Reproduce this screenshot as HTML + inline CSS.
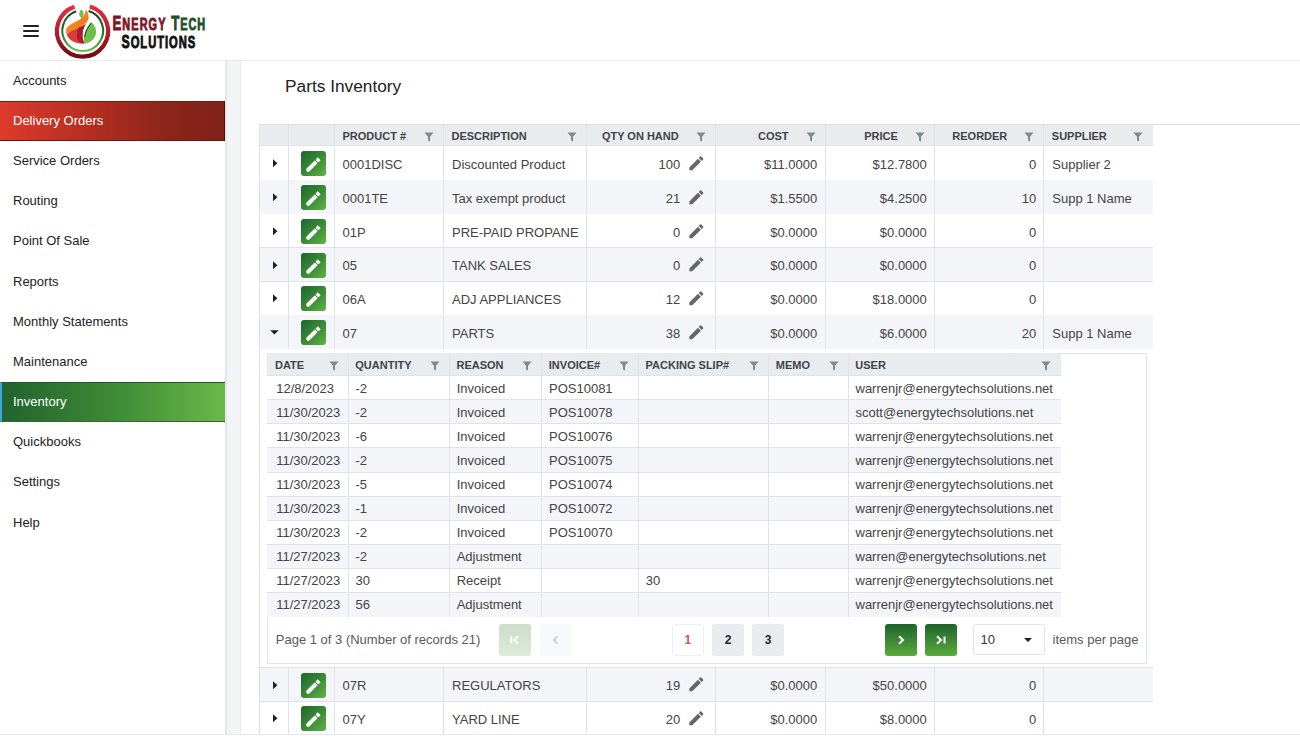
<!DOCTYPE html><html><head><meta charset="utf-8"><title>Parts Inventory</title><style>
*{box-sizing:border-box;margin:0;padding:0}
html,body{width:1300px;height:750px;overflow:hidden;background:#fff;font-family:"Liberation Sans", sans-serif;font-size:13px;color:#434343}
.a{position:absolute}
.t{position:absolute;white-space:nowrap}
.nav{position:absolute;left:0;width:225px;height:40.2px;color:#222;font-size:13px}
.nav span{position:absolute;left:13px;top:12px;line-height:15px}
.hd{position:absolute;background:#e9ecef;}
.ht{position:absolute;font-weight:bold;font-size:11px;color:#3e4348;line-height:13px;white-space:nowrap}
.fi{position:absolute;width:10px;height:10px}
.vl{position:absolute;width:1px;background:#dfe2e6}
.hl{position:absolute;height:1px;background:#dfe2e6}
.cell{position:absolute;white-space:nowrap;line-height:15px;color:#434343}
.eb{position:absolute;width:25px;height:25px;border-radius:3px;background:linear-gradient(135deg,#1d6530 0%,#3b8d35 55%,#62b446 100%)}
.pb{position:absolute;width:32px;height:32px;border-radius:3px}
</style></head><body>
<div class="a" style="left:0;top:60px;width:1300px;height:1px;background:#e8e9eb"></div>
<div class="a" style="left:23px;top:25.3px;width:16px;height:2px;background:#222;border-radius:1px"></div>
<div class="a" style="left:23px;top:30.3px;width:16px;height:2px;background:#222;border-radius:1px"></div>
<div class="a" style="left:23px;top:34.8px;width:16px;height:2px;background:#222;border-radius:1px"></div>
<svg class="a" style="left:50px;top:0" width="165" height="62" viewBox="0 0 165 62">
<defs>
<linearGradient id="rg" x1="0" y1="0" x2="0" y2="1"><stop offset="0" stop-color="#e2313f"/><stop offset="0.5" stop-color="#b81c2c"/><stop offset="1" stop-color="#720b17"/></linearGradient>
<linearGradient id="gg" x1="0" y1="0" x2="0" y2="1"><stop offset="0" stop-color="#17452a"/><stop offset="0.6" stop-color="#2f7a35"/><stop offset="1" stop-color="#6cc04a"/></linearGradient>
<linearGradient id="og" x1="0" y1="0" x2="1" y2="1"><stop offset="0" stop-color="#f7a21f"/><stop offset="1" stop-color="#ec6a1c"/></linearGradient>
</defs>
<path d="M 24.6 6.7 A 25.6 25.6 0 1 0 39.8 6.5" fill="none" stroke="url(#rg)" stroke-width="4.2"/>
<path d="M 26.2 11.3 A 20.4 20.4 0 1 0 38.6 11.1" fill="none" stroke="url(#gg)" stroke-width="2.1"/>
<path d="M 35.4 10.3 C 35.6 13.3 34.2 16 31 18.6 C 27 21.8 18.8 24.2 16.4 28.6 C 15.6 30.8 16 33 16.8 34.5 C 19 31.5 24 29.5 28 28 C 33 26 37.5 23 38.5 18.5 C 39 15.5 38 12.5 36.5 10.2 Z" fill="url(#og)"/>
<path d="M 16.8 34.5 C 19 31.5 24 29.5 28 28 C 31.5 26.8 34 25.5 36 24 C 33.5 27 32.5 31 32.5 36 C 32.5 39 33.5 41.5 34.5 43.5 C 26 44 18.5 40.5 16.8 34.5 Z" fill="#de3a3a"/>
<path d="M 28 28 C 31.5 26.8 34 25.5 36 24 C 33.5 27 32.5 31 32.5 36 C 32.5 39 33.5 41.5 34.5 43.5 C 31 43.5 28.5 42 27.5 39 C 26.5 35 27 31 28 28 Z" fill="#b01a2d"/>
<path d="M 41.5 22.5 C 45 25 46.5 29 46 33 C 45.5 38.5 40.5 43 34.5 43.5 C 33 39 34 33 36.5 29 C 38 26.5 40 24.5 41.5 22.5 Z" fill="#6fc04a"/>
<path d="M 41.5 22.8 C 38.5 26 35.5 31 34.8 37" fill="none" stroke="#1b5a2b" stroke-width="1.1"/>
<path d="M 31.2 9.6 C 34.2 11.5 34.5 15.8 31.8 18.4 C 28.6 16.6 28.4 12.3 31.2 9.6 Z" fill="#74bf4e"/>
</svg>
<svg class="a" style="left:108px;top:10px" width="105" height="42" viewBox="0 0 105 42">
<g transform="scale(0.68,1)">
<text x="6.47" y="19.6" font-family="Liberation Sans" font-weight="bold" fill="#7d1527" stroke="#7d1527" stroke-width="0.9" textLength="77.94" lengthAdjust="spacing"><tspan font-size="19.5">E</tspan><tspan font-size="16">NERGY</tspan></text>
<text x="92.94" y="19.6" font-family="Liberation Sans" font-weight="bold" fill="#1f4f2a" stroke="#1f4f2a" stroke-width="0.9" textLength="50.00" lengthAdjust="spacing"><tspan font-size="19.5">T</tspan><tspan font-size="16">ECH</tspan></text>
<text x="20.00" y="37.6" font-family="Liberation Sans" font-weight="bold" fill="#111" stroke="#111" stroke-width="0.9" textLength="108.24" lengthAdjust="spacing"><tspan font-size="18">S</tspan><tspan font-size="16.5">OLUTIONS</tspan></text>
</g>
</svg>
<div class="nav" style="top:60.60px;"><span style="">Accounts</span></div>
<div class="nav" style="top:100.78px;background:linear-gradient(90deg,#dd3b2c 0%,#b02c20 45%,#8a2519 75%,#80211a 100%);color:#fff;border-top:1px solid #7a1a12;border-bottom:1px solid #6a1410;border-right:1px solid #4a0c0a;"><span style="top:11px">Delivery Orders</span></div>
<div class="nav" style="top:140.96px;"><span style="">Service Orders</span></div>
<div class="nav" style="top:181.14px;"><span style="">Routing</span></div>
<div class="nav" style="top:221.32px;"><span style="">Point Of Sale</span></div>
<div class="nav" style="top:261.50px;"><span style="">Reports</span></div>
<div class="nav" style="top:301.68px;"><span style="">Monthly Statements</span></div>
<div class="nav" style="top:341.86px;"><span style="">Maintenance</span></div>
<div class="nav" style="top:382.04px;background:linear-gradient(90deg,#22622d 0%,#3f8a37 50%,#6ab947 100%);color:#fff;border-left:2px solid #3ea7dc;border-top:1px solid #1e5a28;border-bottom:1px solid #2c6e2e;"><span style="left:11px;top:11px">Inventory</span></div>
<div class="nav" style="top:422.22px;"><span style="">Quickbooks</span></div>
<div class="nav" style="top:462.40px;"><span style="">Settings</span></div>
<div class="nav" style="top:502.58px;"><span style="">Help</span></div>
<div class="a" style="left:225px;top:61px;width:2px;height:673px;background:#e4e6e9"></div>
<div class="a" style="left:227px;top:61px;width:12.5px;height:673px;background:#f3f4f6"></div>
<div class="a" style="left:239.5px;top:61px;width:1.5px;height:673px;background:#e8e9ec"></div>
<div class="a" style="left:0;top:734px;width:1300px;height:1px;background:#e6e8eb"></div>
<div class="t" style="left:285px;top:75.8px;font-size:17.3px;line-height:20px;color:#222">Parts Inventory</div>
<div class="hd" style="left:259.0px;top:124.50px;width:893.70px;height:21.90px"></div>
<div class="hl" style="left:259.0px;top:124px;width:1041.0px;background:#dcdfe3"></div>
<div class="hl" style="left:259.0px;top:145.40px;width:893.70px;background:#e2e5e9"></div>
<div class="ht" style="left:342.50px;top:130.00px">PRODUCT #</div>
<svg class="fi" style="left:424.00px;top:131.90px" width="10" height="10" viewBox="0 0 10 10"><path d="M0.5 0.5 H9.5 L6 4.8 V9.5 L4 8.5 V4.8 Z" fill="#7d8a8c"/></svg>
<div class="ht" style="left:451.50px;top:130.00px">DESCRIPTION</div>
<svg class="fi" style="left:567.00px;top:131.90px" width="10" height="10" viewBox="0 0 10 10"><path d="M0.5 0.5 H9.5 L6 4.8 V9.5 L4 8.5 V4.8 Z" fill="#7d8a8c"/></svg>
<div class="ht" style="right:621.30px;top:130.00px">QTY ON HAND</div>
<svg class="fi" style="left:695.70px;top:131.90px" width="10" height="10" viewBox="0 0 10 10"><path d="M0.5 0.5 H9.5 L6 4.8 V9.5 L4 8.5 V4.8 Z" fill="#7d8a8c"/></svg>
<div class="ht" style="right:511.50px;top:130.00px">COST</div>
<svg class="fi" style="left:805.50px;top:131.90px" width="10" height="10" viewBox="0 0 10 10"><path d="M0.5 0.5 H9.5 L6 4.8 V9.5 L4 8.5 V4.8 Z" fill="#7d8a8c"/></svg>
<div class="ht" style="right:402.20px;top:130.00px">PRICE</div>
<svg class="fi" style="left:914.80px;top:131.90px" width="10" height="10" viewBox="0 0 10 10"><path d="M0.5 0.5 H9.5 L6 4.8 V9.5 L4 8.5 V4.8 Z" fill="#7d8a8c"/></svg>
<div class="ht" style="right:292.70px;top:130.00px">REORDER</div>
<svg class="fi" style="left:1024.30px;top:131.90px" width="10" height="10" viewBox="0 0 10 10"><path d="M0.5 0.5 H9.5 L6 4.8 V9.5 L4 8.5 V4.8 Z" fill="#7d8a8c"/></svg>
<div class="ht" style="left:1051.80px;top:130.00px">SUPPLIER</div>
<svg class="fi" style="left:1133.20px;top:131.90px" width="10" height="10" viewBox="0 0 10 10"><path d="M0.5 0.5 H9.5 L6 4.8 V9.5 L4 8.5 V4.8 Z" fill="#7d8a8c"/></svg>
<div class="vl" style="left:258.50px;top:124.50px;height:21.90px"></div>
<div class="vl" style="left:287.80px;top:124.50px;height:21.90px"></div>
<div class="vl" style="left:334.00px;top:124.50px;height:21.90px"></div>
<div class="vl" style="left:443.00px;top:124.50px;height:21.90px"></div>
<div class="vl" style="left:586.00px;top:124.50px;height:21.90px"></div>
<div class="vl" style="left:714.70px;top:124.50px;height:21.90px"></div>
<div class="vl" style="left:824.50px;top:124.50px;height:21.90px"></div>
<div class="vl" style="left:933.80px;top:124.50px;height:21.90px"></div>
<div class="vl" style="left:1043.30px;top:124.50px;height:21.90px"></div>
<div class="a" style="left:259.0px;top:146.40px;width:893.70px;height:33.8px;background:#fff"></div>
<div class="hl" style="left:259.0px;top:179.70px;width:893.70px"></div>
<div class="vl" style="left:258.50px;top:146.40px;height:33.8px"></div>
<div class="vl" style="left:287.80px;top:146.40px;height:33.8px"></div>
<div class="vl" style="left:334.00px;top:146.40px;height:33.8px"></div>
<div class="vl" style="left:443.00px;top:146.40px;height:33.8px"></div>
<div class="vl" style="left:586.00px;top:146.40px;height:33.8px"></div>
<div class="vl" style="left:714.70px;top:146.40px;height:33.8px"></div>
<div class="vl" style="left:824.50px;top:146.40px;height:33.8px"></div>
<div class="vl" style="left:933.80px;top:146.40px;height:33.8px"></div>
<div class="vl" style="left:1043.30px;top:146.40px;height:33.8px"></div>
<svg class="a" style="left:271.60px;top:159.10px" width="7" height="9" viewBox="0 0 7 9"><path d="M1 0.3 V8.3 L5.4 4.3 Z" fill="#1e1e1e"/></svg>
<div class="eb" style="left:301.2px;top:151.10px"><svg class="a" style="left:0;top:0" width="25" height="25" viewBox="0 0 25 25"><path d="M7.2 18.8 L14.9 11.1" stroke="#fff" stroke-width="4.1" stroke-linecap="round"/><path d="M16.1 9.9 L18.2 7.8" stroke="#fff" stroke-width="4.1"/><path d="M14.1 9.1 L16.9 11.9" stroke="#2f7434" stroke-width="0.9"/></svg></div>
<div class="cell" style="left:342.50px;top:156.90px">0001DISC</div>
<div class="cell" style="left:452.00px;top:156.90px">Discounted Product</div>
<div class="cell" style="right:619.80px;top:156.90px">100</div>
<svg class="a" style="left:686.60px;top:154.00px" width="18.7" height="18.7" viewBox="0 0 24 24"><path d="M3 17.25V21h3.75L17.81 9.94l-3.75-3.75L3 17.25zM20.71 7.04c.39-.39.39-1.02 0-1.41l-2.34-2.34c-.39-.39-1.02-.39-1.41 0l-1.83 1.83 3.75 3.75 1.83-1.83z" fill="#666"/></svg>
<div class="cell" style="right:482.80px;top:156.90px">$11.0000</div>
<div class="cell" style="right:373.20px;top:156.90px">$12.7800</div>
<div class="cell" style="right:263.70px;top:156.90px">0</div>
<div class="cell" style="left:1052.30px;top:156.90px">Supplier 2</div>
<div class="a" style="left:259.0px;top:180.20px;width:893.70px;height:33.8px;background:#f4f5f8"></div>
<div class="hl" style="left:259.0px;top:213.50px;width:893.70px"></div>
<div class="vl" style="left:258.50px;top:180.20px;height:33.8px"></div>
<div class="vl" style="left:287.80px;top:180.20px;height:33.8px"></div>
<div class="vl" style="left:334.00px;top:180.20px;height:33.8px"></div>
<div class="vl" style="left:443.00px;top:180.20px;height:33.8px"></div>
<div class="vl" style="left:586.00px;top:180.20px;height:33.8px"></div>
<div class="vl" style="left:714.70px;top:180.20px;height:33.8px"></div>
<div class="vl" style="left:824.50px;top:180.20px;height:33.8px"></div>
<div class="vl" style="left:933.80px;top:180.20px;height:33.8px"></div>
<div class="vl" style="left:1043.30px;top:180.20px;height:33.8px"></div>
<svg class="a" style="left:271.60px;top:192.90px" width="7" height="9" viewBox="0 0 7 9"><path d="M1 0.3 V8.3 L5.4 4.3 Z" fill="#1e1e1e"/></svg>
<div class="eb" style="left:301.2px;top:184.90px"><svg class="a" style="left:0;top:0" width="25" height="25" viewBox="0 0 25 25"><path d="M7.2 18.8 L14.9 11.1" stroke="#fff" stroke-width="4.1" stroke-linecap="round"/><path d="M16.1 9.9 L18.2 7.8" stroke="#fff" stroke-width="4.1"/><path d="M14.1 9.1 L16.9 11.9" stroke="#2f7434" stroke-width="0.9"/></svg></div>
<div class="cell" style="left:342.50px;top:190.70px">0001TE</div>
<div class="cell" style="left:452.00px;top:190.70px">Tax exempt product</div>
<div class="cell" style="right:619.80px;top:190.70px">21</div>
<svg class="a" style="left:686.60px;top:187.80px" width="18.7" height="18.7" viewBox="0 0 24 24"><path d="M3 17.25V21h3.75L17.81 9.94l-3.75-3.75L3 17.25zM20.71 7.04c.39-.39.39-1.02 0-1.41l-2.34-2.34c-.39-.39-1.02-.39-1.41 0l-1.83 1.83 3.75 3.75 1.83-1.83z" fill="#666"/></svg>
<div class="cell" style="right:482.80px;top:190.70px">$1.5500</div>
<div class="cell" style="right:373.20px;top:190.70px">$4.2500</div>
<div class="cell" style="right:263.70px;top:190.70px">10</div>
<div class="cell" style="left:1052.30px;top:190.70px">Supp 1 Name</div>
<div class="a" style="left:259.0px;top:214.00px;width:893.70px;height:33.8px;background:#fff"></div>
<div class="hl" style="left:259.0px;top:247.30px;width:893.70px"></div>
<div class="vl" style="left:258.50px;top:214.00px;height:33.8px"></div>
<div class="vl" style="left:287.80px;top:214.00px;height:33.8px"></div>
<div class="vl" style="left:334.00px;top:214.00px;height:33.8px"></div>
<div class="vl" style="left:443.00px;top:214.00px;height:33.8px"></div>
<div class="vl" style="left:586.00px;top:214.00px;height:33.8px"></div>
<div class="vl" style="left:714.70px;top:214.00px;height:33.8px"></div>
<div class="vl" style="left:824.50px;top:214.00px;height:33.8px"></div>
<div class="vl" style="left:933.80px;top:214.00px;height:33.8px"></div>
<div class="vl" style="left:1043.30px;top:214.00px;height:33.8px"></div>
<svg class="a" style="left:271.60px;top:226.70px" width="7" height="9" viewBox="0 0 7 9"><path d="M1 0.3 V8.3 L5.4 4.3 Z" fill="#1e1e1e"/></svg>
<div class="eb" style="left:301.2px;top:218.70px"><svg class="a" style="left:0;top:0" width="25" height="25" viewBox="0 0 25 25"><path d="M7.2 18.8 L14.9 11.1" stroke="#fff" stroke-width="4.1" stroke-linecap="round"/><path d="M16.1 9.9 L18.2 7.8" stroke="#fff" stroke-width="4.1"/><path d="M14.1 9.1 L16.9 11.9" stroke="#2f7434" stroke-width="0.9"/></svg></div>
<div class="cell" style="left:342.50px;top:224.50px">01P</div>
<div class="cell" style="left:452.00px;top:224.50px">PRE-PAID PROPANE</div>
<div class="cell" style="right:619.80px;top:224.50px">0</div>
<svg class="a" style="left:686.60px;top:221.60px" width="18.7" height="18.7" viewBox="0 0 24 24"><path d="M3 17.25V21h3.75L17.81 9.94l-3.75-3.75L3 17.25zM20.71 7.04c.39-.39.39-1.02 0-1.41l-2.34-2.34c-.39-.39-1.02-.39-1.41 0l-1.83 1.83 3.75 3.75 1.83-1.83z" fill="#666"/></svg>
<div class="cell" style="right:482.80px;top:224.50px">$0.0000</div>
<div class="cell" style="right:373.20px;top:224.50px">$0.0000</div>
<div class="cell" style="right:263.70px;top:224.50px">0</div>
<div class="cell" style="left:1052.30px;top:224.50px"></div>
<div class="a" style="left:259.0px;top:247.80px;width:893.70px;height:33.8px;background:#f4f5f8"></div>
<div class="hl" style="left:259.0px;top:281.10px;width:893.70px"></div>
<div class="vl" style="left:258.50px;top:247.80px;height:33.8px"></div>
<div class="vl" style="left:287.80px;top:247.80px;height:33.8px"></div>
<div class="vl" style="left:334.00px;top:247.80px;height:33.8px"></div>
<div class="vl" style="left:443.00px;top:247.80px;height:33.8px"></div>
<div class="vl" style="left:586.00px;top:247.80px;height:33.8px"></div>
<div class="vl" style="left:714.70px;top:247.80px;height:33.8px"></div>
<div class="vl" style="left:824.50px;top:247.80px;height:33.8px"></div>
<div class="vl" style="left:933.80px;top:247.80px;height:33.8px"></div>
<div class="vl" style="left:1043.30px;top:247.80px;height:33.8px"></div>
<svg class="a" style="left:271.60px;top:260.50px" width="7" height="9" viewBox="0 0 7 9"><path d="M1 0.3 V8.3 L5.4 4.3 Z" fill="#1e1e1e"/></svg>
<div class="eb" style="left:301.2px;top:252.50px"><svg class="a" style="left:0;top:0" width="25" height="25" viewBox="0 0 25 25"><path d="M7.2 18.8 L14.9 11.1" stroke="#fff" stroke-width="4.1" stroke-linecap="round"/><path d="M16.1 9.9 L18.2 7.8" stroke="#fff" stroke-width="4.1"/><path d="M14.1 9.1 L16.9 11.9" stroke="#2f7434" stroke-width="0.9"/></svg></div>
<div class="cell" style="left:342.50px;top:258.30px">05</div>
<div class="cell" style="left:452.00px;top:258.30px">TANK SALES</div>
<div class="cell" style="right:619.80px;top:258.30px">0</div>
<svg class="a" style="left:686.60px;top:255.40px" width="18.7" height="18.7" viewBox="0 0 24 24"><path d="M3 17.25V21h3.75L17.81 9.94l-3.75-3.75L3 17.25zM20.71 7.04c.39-.39.39-1.02 0-1.41l-2.34-2.34c-.39-.39-1.02-.39-1.41 0l-1.83 1.83 3.75 3.75 1.83-1.83z" fill="#666"/></svg>
<div class="cell" style="right:482.80px;top:258.30px">$0.0000</div>
<div class="cell" style="right:373.20px;top:258.30px">$0.0000</div>
<div class="cell" style="right:263.70px;top:258.30px">0</div>
<div class="cell" style="left:1052.30px;top:258.30px"></div>
<div class="a" style="left:259.0px;top:281.60px;width:893.70px;height:33.8px;background:#fff"></div>
<div class="hl" style="left:259.0px;top:314.90px;width:893.70px"></div>
<div class="vl" style="left:258.50px;top:281.60px;height:33.8px"></div>
<div class="vl" style="left:287.80px;top:281.60px;height:33.8px"></div>
<div class="vl" style="left:334.00px;top:281.60px;height:33.8px"></div>
<div class="vl" style="left:443.00px;top:281.60px;height:33.8px"></div>
<div class="vl" style="left:586.00px;top:281.60px;height:33.8px"></div>
<div class="vl" style="left:714.70px;top:281.60px;height:33.8px"></div>
<div class="vl" style="left:824.50px;top:281.60px;height:33.8px"></div>
<div class="vl" style="left:933.80px;top:281.60px;height:33.8px"></div>
<div class="vl" style="left:1043.30px;top:281.60px;height:33.8px"></div>
<svg class="a" style="left:271.60px;top:294.30px" width="7" height="9" viewBox="0 0 7 9"><path d="M1 0.3 V8.3 L5.4 4.3 Z" fill="#1e1e1e"/></svg>
<div class="eb" style="left:301.2px;top:286.30px"><svg class="a" style="left:0;top:0" width="25" height="25" viewBox="0 0 25 25"><path d="M7.2 18.8 L14.9 11.1" stroke="#fff" stroke-width="4.1" stroke-linecap="round"/><path d="M16.1 9.9 L18.2 7.8" stroke="#fff" stroke-width="4.1"/><path d="M14.1 9.1 L16.9 11.9" stroke="#2f7434" stroke-width="0.9"/></svg></div>
<div class="cell" style="left:342.50px;top:292.10px">06A</div>
<div class="cell" style="left:452.00px;top:292.10px">ADJ APPLIANCES</div>
<div class="cell" style="right:619.80px;top:292.10px">12</div>
<svg class="a" style="left:686.60px;top:289.20px" width="18.7" height="18.7" viewBox="0 0 24 24"><path d="M3 17.25V21h3.75L17.81 9.94l-3.75-3.75L3 17.25zM20.71 7.04c.39-.39.39-1.02 0-1.41l-2.34-2.34c-.39-.39-1.02-.39-1.41 0l-1.83 1.83 3.75 3.75 1.83-1.83z" fill="#666"/></svg>
<div class="cell" style="right:482.80px;top:292.10px">$0.0000</div>
<div class="cell" style="right:373.20px;top:292.10px">$18.0000</div>
<div class="cell" style="right:263.70px;top:292.10px">0</div>
<div class="cell" style="left:1052.30px;top:292.10px"></div>
<div class="a" style="left:259.0px;top:315.40px;width:893.70px;height:33.8px;background:#f4f5f8"></div>
<div class="hl" style="left:259.0px;top:348.70px;width:893.70px"></div>
<div class="vl" style="left:258.50px;top:315.40px;height:33.8px"></div>
<div class="vl" style="left:287.80px;top:315.40px;height:33.8px"></div>
<div class="vl" style="left:334.00px;top:315.40px;height:33.8px"></div>
<div class="vl" style="left:443.00px;top:315.40px;height:33.8px"></div>
<div class="vl" style="left:586.00px;top:315.40px;height:33.8px"></div>
<div class="vl" style="left:714.70px;top:315.40px;height:33.8px"></div>
<div class="vl" style="left:824.50px;top:315.40px;height:33.8px"></div>
<div class="vl" style="left:933.80px;top:315.40px;height:33.8px"></div>
<div class="vl" style="left:1043.30px;top:315.40px;height:33.8px"></div>
<svg class="a" style="left:270.00px;top:329.10px" width="9" height="7" viewBox="0 0 9 7"><path d="M0.2 1.2 H8.6 L4.4 5.6 Z" fill="#1e1e1e"/></svg>
<div class="eb" style="left:301.2px;top:320.10px"><svg class="a" style="left:0;top:0" width="25" height="25" viewBox="0 0 25 25"><path d="M7.2 18.8 L14.9 11.1" stroke="#fff" stroke-width="4.1" stroke-linecap="round"/><path d="M16.1 9.9 L18.2 7.8" stroke="#fff" stroke-width="4.1"/><path d="M14.1 9.1 L16.9 11.9" stroke="#2f7434" stroke-width="0.9"/></svg></div>
<div class="cell" style="left:342.50px;top:325.90px">07</div>
<div class="cell" style="left:452.00px;top:325.90px">PARTS</div>
<div class="cell" style="right:619.80px;top:325.90px">38</div>
<svg class="a" style="left:686.60px;top:323.00px" width="18.7" height="18.7" viewBox="0 0 24 24"><path d="M3 17.25V21h3.75L17.81 9.94l-3.75-3.75L3 17.25zM20.71 7.04c.39-.39.39-1.02 0-1.41l-2.34-2.34c-.39-.39-1.02-.39-1.41 0l-1.83 1.83 3.75 3.75 1.83-1.83z" fill="#666"/></svg>
<div class="cell" style="right:482.80px;top:325.90px">$0.0000</div>
<div class="cell" style="right:373.20px;top:325.90px">$6.0000</div>
<div class="cell" style="right:263.70px;top:325.90px">20</div>
<div class="cell" style="left:1052.30px;top:325.90px">Supp 1 Name</div>
<div class="a" style="left:259.0px;top:349.20px;width:893.70px;height:318.60px;background:#fff"></div>
<div class="vl" style="left:258.5px;top:349.20px;height:318.60px"></div>
<div class="hl" style="left:259.0px;top:667.30px;width:893.70px"></div>
<div class="a" style="left:266.90px;top:352.80px;width:880.40px;height:311.30px;border:1px solid #e1e4e8"></div>
<div class="hd" style="left:267.40px;top:353.30px;width:793.40px;height:22.30px"></div>
<div class="ht" style="left:275.00px;top:358.60px">DATE</div>
<svg class="fi" style="left:328.50px;top:360.70px" width="10" height="10" viewBox="0 0 10 10"><path d="M0.5 0.5 H9.5 L6 4.8 V9.5 L4 8.5 V4.8 Z" fill="#7d8a8c"/></svg>
<div class="ht" style="left:355.30px;top:358.60px">QUANTITY</div>
<svg class="fi" style="left:429.70px;top:360.70px" width="10" height="10" viewBox="0 0 10 10"><path d="M0.5 0.5 H9.5 L6 4.8 V9.5 L4 8.5 V4.8 Z" fill="#7d8a8c"/></svg>
<div class="ht" style="left:456.50px;top:358.60px">REASON</div>
<svg class="fi" style="left:522.00px;top:360.70px" width="10" height="10" viewBox="0 0 10 10"><path d="M0.5 0.5 H9.5 L6 4.8 V9.5 L4 8.5 V4.8 Z" fill="#7d8a8c"/></svg>
<div class="ht" style="left:548.80px;top:358.60px">INVOICE#</div>
<svg class="fi" style="left:618.80px;top:360.70px" width="10" height="10" viewBox="0 0 10 10"><path d="M0.5 0.5 H9.5 L6 4.8 V9.5 L4 8.5 V4.8 Z" fill="#7d8a8c"/></svg>
<div class="ht" style="left:645.60px;top:358.60px">PACKING SLIP#</div>
<svg class="fi" style="left:749.00px;top:360.70px" width="10" height="10" viewBox="0 0 10 10"><path d="M0.5 0.5 H9.5 L6 4.8 V9.5 L4 8.5 V4.8 Z" fill="#7d8a8c"/></svg>
<div class="ht" style="left:775.80px;top:358.60px">MEMO</div>
<svg class="fi" style="left:828.50px;top:360.70px" width="10" height="10" viewBox="0 0 10 10"><path d="M0.5 0.5 H9.5 L6 4.8 V9.5 L4 8.5 V4.8 Z" fill="#7d8a8c"/></svg>
<div class="ht" style="left:855.30px;top:358.60px">USER</div>
<svg class="fi" style="left:1041.30px;top:360.70px" width="10" height="10" viewBox="0 0 10 10"><path d="M0.5 0.5 H9.5 L6 4.8 V9.5 L4 8.5 V4.8 Z" fill="#7d8a8c"/></svg>
<div class="vl" style="left:347.50px;top:353.30px;height:22.30px"></div>
<div class="vl" style="left:448.70px;top:353.30px;height:22.30px"></div>
<div class="vl" style="left:541.00px;top:353.30px;height:22.30px"></div>
<div class="vl" style="left:637.80px;top:353.30px;height:22.30px"></div>
<div class="vl" style="left:768.00px;top:353.30px;height:22.30px"></div>
<div class="vl" style="left:847.50px;top:353.30px;height:22.30px"></div>
<div class="a" style="left:267.40px;top:375.60px;width:793.40px;height:24.1px;background:#fff"></div>
<div class="vl" style="left:347.50px;top:375.60px;height:24.1px"></div>
<div class="vl" style="left:448.70px;top:375.60px;height:24.1px"></div>
<div class="vl" style="left:541.00px;top:375.60px;height:24.1px"></div>
<div class="vl" style="left:637.80px;top:375.60px;height:24.1px"></div>
<div class="vl" style="left:768.00px;top:375.60px;height:24.1px"></div>
<div class="vl" style="left:847.50px;top:375.60px;height:24.1px"></div>
<div class="cell" style="left:276.20px;top:380.60px">12/8/2023</div>
<div class="cell" style="left:355.50px;top:380.60px">-2</div>
<div class="cell" style="left:456.70px;top:380.60px">Invoiced</div>
<div class="cell" style="left:549.00px;top:380.60px">POS10081</div>
<div class="cell" style="left:855.50px;top:380.60px">warrenjr@energytechsolutions.net</div>
<div class="a" style="left:267.40px;top:399.70px;width:793.40px;height:24.1px;background:#f4f5f8"></div>
<div class="hl" style="left:267.40px;top:399.20px;width:793.40px"></div>
<div class="vl" style="left:347.50px;top:399.70px;height:24.1px"></div>
<div class="vl" style="left:448.70px;top:399.70px;height:24.1px"></div>
<div class="vl" style="left:541.00px;top:399.70px;height:24.1px"></div>
<div class="vl" style="left:637.80px;top:399.70px;height:24.1px"></div>
<div class="vl" style="left:768.00px;top:399.70px;height:24.1px"></div>
<div class="vl" style="left:847.50px;top:399.70px;height:24.1px"></div>
<div class="cell" style="left:276.20px;top:404.60px">11/30/2023</div>
<div class="cell" style="left:355.50px;top:404.60px">-2</div>
<div class="cell" style="left:456.70px;top:404.60px">Invoiced</div>
<div class="cell" style="left:549.00px;top:404.60px">POS10078</div>
<div class="cell" style="left:855.50px;top:404.60px">scott@energytechsolutions.net</div>
<div class="a" style="left:267.40px;top:423.80px;width:793.40px;height:24.1px;background:#fff"></div>
<div class="hl" style="left:267.40px;top:423.30px;width:793.40px"></div>
<div class="vl" style="left:347.50px;top:423.80px;height:24.1px"></div>
<div class="vl" style="left:448.70px;top:423.80px;height:24.1px"></div>
<div class="vl" style="left:541.00px;top:423.80px;height:24.1px"></div>
<div class="vl" style="left:637.80px;top:423.80px;height:24.1px"></div>
<div class="vl" style="left:768.00px;top:423.80px;height:24.1px"></div>
<div class="vl" style="left:847.50px;top:423.80px;height:24.1px"></div>
<div class="cell" style="left:276.20px;top:428.60px">11/30/2023</div>
<div class="cell" style="left:355.50px;top:428.60px">-6</div>
<div class="cell" style="left:456.70px;top:428.60px">Invoiced</div>
<div class="cell" style="left:549.00px;top:428.60px">POS10076</div>
<div class="cell" style="left:855.50px;top:428.60px">warrenjr@energytechsolutions.net</div>
<div class="a" style="left:267.40px;top:447.90px;width:793.40px;height:24.1px;background:#f4f5f8"></div>
<div class="hl" style="left:267.40px;top:447.40px;width:793.40px"></div>
<div class="vl" style="left:347.50px;top:447.90px;height:24.1px"></div>
<div class="vl" style="left:448.70px;top:447.90px;height:24.1px"></div>
<div class="vl" style="left:541.00px;top:447.90px;height:24.1px"></div>
<div class="vl" style="left:637.80px;top:447.90px;height:24.1px"></div>
<div class="vl" style="left:768.00px;top:447.90px;height:24.1px"></div>
<div class="vl" style="left:847.50px;top:447.90px;height:24.1px"></div>
<div class="cell" style="left:276.20px;top:452.60px">11/30/2023</div>
<div class="cell" style="left:355.50px;top:452.60px">-2</div>
<div class="cell" style="left:456.70px;top:452.60px">Invoiced</div>
<div class="cell" style="left:549.00px;top:452.60px">POS10075</div>
<div class="cell" style="left:855.50px;top:452.60px">warrenjr@energytechsolutions.net</div>
<div class="a" style="left:267.40px;top:472.00px;width:793.40px;height:24.1px;background:#fff"></div>
<div class="hl" style="left:267.40px;top:471.50px;width:793.40px"></div>
<div class="vl" style="left:347.50px;top:472.00px;height:24.1px"></div>
<div class="vl" style="left:448.70px;top:472.00px;height:24.1px"></div>
<div class="vl" style="left:541.00px;top:472.00px;height:24.1px"></div>
<div class="vl" style="left:637.80px;top:472.00px;height:24.1px"></div>
<div class="vl" style="left:768.00px;top:472.00px;height:24.1px"></div>
<div class="vl" style="left:847.50px;top:472.00px;height:24.1px"></div>
<div class="cell" style="left:276.20px;top:476.60px">11/30/2023</div>
<div class="cell" style="left:355.50px;top:476.60px">-5</div>
<div class="cell" style="left:456.70px;top:476.60px">Invoiced</div>
<div class="cell" style="left:549.00px;top:476.60px">POS10074</div>
<div class="cell" style="left:855.50px;top:476.60px">warrenjr@energytechsolutions.net</div>
<div class="a" style="left:267.40px;top:496.10px;width:793.40px;height:24.1px;background:#f4f5f8"></div>
<div class="hl" style="left:267.40px;top:495.60px;width:793.40px"></div>
<div class="vl" style="left:347.50px;top:496.10px;height:24.1px"></div>
<div class="vl" style="left:448.70px;top:496.10px;height:24.1px"></div>
<div class="vl" style="left:541.00px;top:496.10px;height:24.1px"></div>
<div class="vl" style="left:637.80px;top:496.10px;height:24.1px"></div>
<div class="vl" style="left:768.00px;top:496.10px;height:24.1px"></div>
<div class="vl" style="left:847.50px;top:496.10px;height:24.1px"></div>
<div class="cell" style="left:276.20px;top:500.60px">11/30/2023</div>
<div class="cell" style="left:355.50px;top:500.60px">-1</div>
<div class="cell" style="left:456.70px;top:500.60px">Invoiced</div>
<div class="cell" style="left:549.00px;top:500.60px">POS10072</div>
<div class="cell" style="left:855.50px;top:500.60px">warrenjr@energytechsolutions.net</div>
<div class="a" style="left:267.40px;top:520.20px;width:793.40px;height:24.1px;background:#fff"></div>
<div class="hl" style="left:267.40px;top:519.70px;width:793.40px"></div>
<div class="vl" style="left:347.50px;top:520.20px;height:24.1px"></div>
<div class="vl" style="left:448.70px;top:520.20px;height:24.1px"></div>
<div class="vl" style="left:541.00px;top:520.20px;height:24.1px"></div>
<div class="vl" style="left:637.80px;top:520.20px;height:24.1px"></div>
<div class="vl" style="left:768.00px;top:520.20px;height:24.1px"></div>
<div class="vl" style="left:847.50px;top:520.20px;height:24.1px"></div>
<div class="cell" style="left:276.20px;top:524.60px">11/30/2023</div>
<div class="cell" style="left:355.50px;top:524.60px">-2</div>
<div class="cell" style="left:456.70px;top:524.60px">Invoiced</div>
<div class="cell" style="left:549.00px;top:524.60px">POS10070</div>
<div class="cell" style="left:855.50px;top:524.60px">warrenjr@energytechsolutions.net</div>
<div class="a" style="left:267.40px;top:544.30px;width:793.40px;height:24.1px;background:#f4f5f8"></div>
<div class="hl" style="left:267.40px;top:543.80px;width:793.40px"></div>
<div class="vl" style="left:347.50px;top:544.30px;height:24.1px"></div>
<div class="vl" style="left:448.70px;top:544.30px;height:24.1px"></div>
<div class="vl" style="left:541.00px;top:544.30px;height:24.1px"></div>
<div class="vl" style="left:637.80px;top:544.30px;height:24.1px"></div>
<div class="vl" style="left:768.00px;top:544.30px;height:24.1px"></div>
<div class="vl" style="left:847.50px;top:544.30px;height:24.1px"></div>
<div class="cell" style="left:276.20px;top:548.60px">11/27/2023</div>
<div class="cell" style="left:355.50px;top:548.60px">-2</div>
<div class="cell" style="left:456.70px;top:548.60px">Adjustment</div>
<div class="cell" style="left:855.50px;top:548.60px">warren@energytechsolutions.net</div>
<div class="a" style="left:267.40px;top:568.40px;width:793.40px;height:24.1px;background:#fff"></div>
<div class="hl" style="left:267.40px;top:567.90px;width:793.40px"></div>
<div class="vl" style="left:347.50px;top:568.40px;height:24.1px"></div>
<div class="vl" style="left:448.70px;top:568.40px;height:24.1px"></div>
<div class="vl" style="left:541.00px;top:568.40px;height:24.1px"></div>
<div class="vl" style="left:637.80px;top:568.40px;height:24.1px"></div>
<div class="vl" style="left:768.00px;top:568.40px;height:24.1px"></div>
<div class="vl" style="left:847.50px;top:568.40px;height:24.1px"></div>
<div class="cell" style="left:276.20px;top:572.60px">11/27/2023</div>
<div class="cell" style="left:355.50px;top:572.60px">30</div>
<div class="cell" style="left:456.70px;top:572.60px">Receipt</div>
<div class="cell" style="left:645.80px;top:572.60px">30</div>
<div class="cell" style="left:855.50px;top:572.60px">warrenjr@energytechsolutions.net</div>
<div class="a" style="left:267.40px;top:592.50px;width:793.40px;height:24.1px;background:#f4f5f8"></div>
<div class="hl" style="left:267.40px;top:592.00px;width:793.40px"></div>
<div class="vl" style="left:347.50px;top:592.50px;height:24.1px"></div>
<div class="vl" style="left:448.70px;top:592.50px;height:24.1px"></div>
<div class="vl" style="left:541.00px;top:592.50px;height:24.1px"></div>
<div class="vl" style="left:637.80px;top:592.50px;height:24.1px"></div>
<div class="vl" style="left:768.00px;top:592.50px;height:24.1px"></div>
<div class="vl" style="left:847.50px;top:592.50px;height:24.1px"></div>
<div class="cell" style="left:276.20px;top:596.60px">11/27/2023</div>
<div class="cell" style="left:355.50px;top:596.60px">56</div>
<div class="cell" style="left:456.70px;top:596.60px">Adjustment</div>
<div class="cell" style="left:855.50px;top:596.60px">warrenjr@energytechsolutions.net</div>
<div class="hl" style="left:267.40px;top:375.10px;width:793.40px"></div>
<div class="t" style="left:275.8px;top:632.00px;line-height:15px;color:#5a5a5a">Page 1 of 3 (Number of records 21)</div>
<div class="pb" style="left:499.3px;top:623.60px;background:linear-gradient(180deg,#cfdccb,#deebd8)"><svg class="a" style="left:10px;top:10px" width="12" height="12" viewBox="0 0 12 12"><path d="M2.2 2.5 V9.5 M9 2.5 L5 6 L9 9.5" stroke="#fff" stroke-width="2" fill="none"/></svg></div>
<div class="pb" style="left:540.2px;top:623.60px;background:#f8f9fa"><svg class="a" style="left:10px;top:10px" width="12" height="12" viewBox="0 0 12 12"><path d="M7.5 2.2 L3.8 6 L7.5 9.8" stroke="#c4c6c9" stroke-width="1.4" fill="none"/></svg></div>
<div class="pb" style="left:671.8px;top:623.60px;background:#fff;border:1px solid #eceef0;color:#d9534f;font-size:12px;font-weight:bold;text-align:center;line-height:30px">1</div>
<div class="pb" style="left:712.2px;top:623.60px;background:#e9ecef;color:#212529;font-size:12px;font-weight:bold;text-align:center;line-height:32px">2</div>
<div class="pb" style="left:752.1px;top:623.60px;background:#e9ecef;color:#212529;font-size:12px;font-weight:bold;text-align:center;line-height:32px">3</div>
<div class="pb" style="left:885.2px;top:623.60px;background:linear-gradient(180deg,#1f632d,#5aab3c)"><svg class="a" style="left:10px;top:10px" width="12" height="12" viewBox="0 0 12 12"><path d="M4 2.3 L8 6 L4 9.7" stroke="#fff" stroke-width="2" fill="none"/></svg></div>
<div class="pb" style="left:925.3px;top:623.60px;background:linear-gradient(180deg,#1f632d,#5aab3c)"><svg class="a" style="left:10px;top:10px" width="12" height="12" viewBox="0 0 12 12"><path d="M2 2.3 L6 6 L2 9.7 M9.5 2.5 V9.5" stroke="#fff" stroke-width="2" fill="none"/></svg></div>
<div class="a" style="left:973px;top:623.80px;width:72px;height:31.5px;border:1px solid #e3e5e8;border-radius:3px;background:#fff"></div>
<div class="t" style="left:980.5px;top:632.00px;line-height:15px;color:#333">10</div>
<svg class="a" style="left:1024px;top:637.60px" width="8" height="4" viewBox="0 0 8 4"><path d="M0 0 H8 L4 4 Z" fill="#222"/></svg>
<div class="t" style="left:1052.5px;top:632.00px;line-height:15px;color:#5a5a5a">items per page</div>
<div class="a" style="left:259.0px;top:667.80px;width:893.70px;height:33.8px;background:#f4f5f8"></div>
<div class="hl" style="left:259.0px;top:701.10px;width:893.70px"></div>
<div class="vl" style="left:258.50px;top:667.80px;height:33.8px"></div>
<div class="vl" style="left:287.80px;top:667.80px;height:33.8px"></div>
<div class="vl" style="left:334.00px;top:667.80px;height:33.8px"></div>
<div class="vl" style="left:443.00px;top:667.80px;height:33.8px"></div>
<div class="vl" style="left:586.00px;top:667.80px;height:33.8px"></div>
<div class="vl" style="left:714.70px;top:667.80px;height:33.8px"></div>
<div class="vl" style="left:824.50px;top:667.80px;height:33.8px"></div>
<div class="vl" style="left:933.80px;top:667.80px;height:33.8px"></div>
<div class="vl" style="left:1043.30px;top:667.80px;height:33.8px"></div>
<svg class="a" style="left:271.60px;top:680.50px" width="7" height="9" viewBox="0 0 7 9"><path d="M1 0.3 V8.3 L5.4 4.3 Z" fill="#1e1e1e"/></svg>
<div class="eb" style="left:301.2px;top:672.50px"><svg class="a" style="left:0;top:0" width="25" height="25" viewBox="0 0 25 25"><path d="M7.2 18.8 L14.9 11.1" stroke="#fff" stroke-width="4.1" stroke-linecap="round"/><path d="M16.1 9.9 L18.2 7.8" stroke="#fff" stroke-width="4.1"/><path d="M14.1 9.1 L16.9 11.9" stroke="#2f7434" stroke-width="0.9"/></svg></div>
<div class="cell" style="left:342.50px;top:678.30px">07R</div>
<div class="cell" style="left:452.00px;top:678.30px">REGULATORS</div>
<div class="cell" style="right:619.80px;top:678.30px">19</div>
<svg class="a" style="left:686.60px;top:675.40px" width="18.7" height="18.7" viewBox="0 0 24 24"><path d="M3 17.25V21h3.75L17.81 9.94l-3.75-3.75L3 17.25zM20.71 7.04c.39-.39.39-1.02 0-1.41l-2.34-2.34c-.39-.39-1.02-.39-1.41 0l-1.83 1.83 3.75 3.75 1.83-1.83z" fill="#666"/></svg>
<div class="cell" style="right:482.80px;top:678.30px">$0.0000</div>
<div class="cell" style="right:373.20px;top:678.30px">$50.0000</div>
<div class="cell" style="right:263.70px;top:678.30px">0</div>
<div class="cell" style="left:1052.30px;top:678.30px"></div>
<div class="a" style="left:259.0px;top:701.60px;width:893.70px;height:33.8px;background:#fff"></div>
<div class="hl" style="left:259.0px;top:734.90px;width:893.70px"></div>
<div class="vl" style="left:258.50px;top:701.60px;height:33.8px"></div>
<div class="vl" style="left:287.80px;top:701.60px;height:33.8px"></div>
<div class="vl" style="left:334.00px;top:701.60px;height:33.8px"></div>
<div class="vl" style="left:443.00px;top:701.60px;height:33.8px"></div>
<div class="vl" style="left:586.00px;top:701.60px;height:33.8px"></div>
<div class="vl" style="left:714.70px;top:701.60px;height:33.8px"></div>
<div class="vl" style="left:824.50px;top:701.60px;height:33.8px"></div>
<div class="vl" style="left:933.80px;top:701.60px;height:33.8px"></div>
<div class="vl" style="left:1043.30px;top:701.60px;height:33.8px"></div>
<svg class="a" style="left:271.60px;top:714.30px" width="7" height="9" viewBox="0 0 7 9"><path d="M1 0.3 V8.3 L5.4 4.3 Z" fill="#1e1e1e"/></svg>
<div class="eb" style="left:301.2px;top:706.30px"><svg class="a" style="left:0;top:0" width="25" height="25" viewBox="0 0 25 25"><path d="M7.2 18.8 L14.9 11.1" stroke="#fff" stroke-width="4.1" stroke-linecap="round"/><path d="M16.1 9.9 L18.2 7.8" stroke="#fff" stroke-width="4.1"/><path d="M14.1 9.1 L16.9 11.9" stroke="#2f7434" stroke-width="0.9"/></svg></div>
<div class="cell" style="left:342.50px;top:712.10px">07Y</div>
<div class="cell" style="left:452.00px;top:712.10px">YARD LINE</div>
<div class="cell" style="right:619.80px;top:712.10px">20</div>
<svg class="a" style="left:686.60px;top:709.20px" width="18.7" height="18.7" viewBox="0 0 24 24"><path d="M3 17.25V21h3.75L17.81 9.94l-3.75-3.75L3 17.25zM20.71 7.04c.39-.39.39-1.02 0-1.41l-2.34-2.34c-.39-.39-1.02-.39-1.41 0l-1.83 1.83 3.75 3.75 1.83-1.83z" fill="#666"/></svg>
<div class="cell" style="right:482.80px;top:712.10px">$0.0000</div>
<div class="cell" style="right:373.20px;top:712.10px">$8.0000</div>
<div class="cell" style="right:263.70px;top:712.10px">0</div>
<div class="cell" style="left:1052.30px;top:712.10px"></div>
<div class="a" style="left:0;top:734.5px;width:1300px;height:16px;background:#fff"></div>
<div class="a" style="left:0;top:734px;width:1300px;height:1px;background:#e6e8eb"></div>
</body></html>
